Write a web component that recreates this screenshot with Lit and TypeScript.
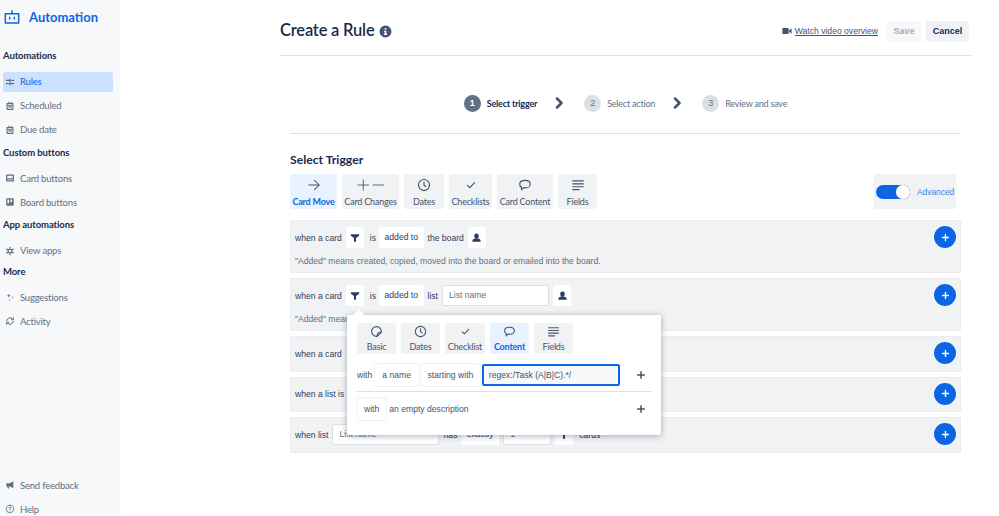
import { LitElement, html, css, svg } from 'lit';
import { customElement } from 'lit/decorators.js';

// all icons drawn on a 24 box, stroke based unless filled below
const line = (d: string, w = 2) => html`<svg viewBox="0 0 24 24" fill="none" stroke="currentColor" stroke-width=${w} stroke-linecap="round" stroke-linejoin="round">${svg`<path d=${d}></path>`}</svg>`;
const fill = (d: string) => html`<svg viewBox="0 0 24 24" fill="currentColor">${svg`<path fill-rule="evenodd" d=${d}></path>`}</svg>`;

const icons = {
  bot: line('M2 7h20v14H2zM12 7V2.500M8.500 12.500v2.500M15.500 12.500v2.500', 2.200),
  sliders: line('M3 8h9M16 8h5M3 16h5M12 16h9M12 5.500v5M12 13.500v5', 2.400),
  calendar: line('M5 6h14v14H5zM5 10h14M9 3v3M15 3v3M9 14h6', 2.600),
  card: line('M4 5h16v14H4zM4 14h16', 3),
  board: fill('M4 3h16a1 1 0 0 1 1 1v16a1 1 0 0 1-1 1H4a1 1 0 0 1-1-1V4a1 1 0 0 1 1-1zm2 3v9h4V6zm7 0v6h4V6z'),
  gear: line('M12 7.500a4.500 4.500 0 1 0 0 9 4.500 4.500 0 0 0 0-9zM12 3v2M12 19v2M4.200 7.500l1.700 1M18.100 15.500l1.700 1M4.200 16.500l1.700-1M18.100 8.500l1.700-1', 3),
  sparkle: fill('M9 4l1.200 3.800L14 9l-3.800 1.200L9 14l-1.200-3.800L4 9l3.800-1.200zM18 9.500l.8 2.200 2.200.8-2.200.8-.8 2.200-.8-2.200-2.200-.8 2.200-.8zM11 16l.7 2.300L14 19l-2.300.7L11 22l-.7-2.300L8 19l2.300-.7z'),
  sync: line('M4 11a8 8 0 0 1 14-4l2 2M20 4v5h-5M20 13a8 8 0 0 1-14 4l-2-2M4 20v-5h5', 2.400),
  megaphone: fill('M20 3v16l-9-3.500H9l1 5H6.500l-1-5H4a1 1 0 0 1-1-1v-6a1 1 0 0 1 1-1h7z'),
  help: line('M12 3a9 9 0 1 0 0 18 9 9 0 0 0 0-18zM9.500 9.500a2.500 2.500 0 1 1 3.600 2.200c-.8.4-1.100 1-1.100 1.800M12 17v.2', 2),
  info: fill('M12 1a11 11 0 1 1 0 22 11 11 0 0 1 0-22zm-1.600 4.500v3h3.200v-3zM9 10.500v2h1.400V16H9v2.500h6V16h-1.400v-5.500z'),
  video: fill('M1 5h15v14H1zM17 10.500L23 5.500v13l-6-5z'),
  chevron: line('M8 3l9 9-9 9', 5),
  arrow: line('M3 12h18M13 4l8 8-8 8', 1.800),
  clock: line('M12 2.500a9.500 9.500 0 1 0 0 19 9.500 9.500 0 0 0 0-19zM12 7v5.500l3 2', 2),
  check: line('M6 12.500l4 4L18 8', 2),
  comment: line('M12 4c5 0 9 2.600 9 6.500S17 17 12.500 17c-1 0-2 0-3-.3L6 20v-4.300C4 15 3 12.800 3 10.500 3 6.600 7 4 12 4z', 2),
  lines: line('M3 5h18M3 10h18M3 15h18M3 20h11', 2),
  sticker: line('M12 3a9 9 0 1 0 0 18c1 0 1.500-.2 2-.7l6.300-6.300c.5-.5.7-1 .7-2a9 9 0 0 0-9-9zM13 21c0-5 3-8 8-8', 2),
  funnel: fill('M2 3h20v3.500L14.500 12v9h-5v-9L2 6.500z'),
  person: fill('M12 3a5 5 0 0 1 5 5v1a5 5 0 0 1-10 0V8a5 5 0 0 1 5-5zM3 21v-2c0-3 3-4.500 6-5h6c3 .5 6 2 6 5v2z'),
  plus: line('M12 4v16M4 12h16', 3.600),
};

const sideNav = [
  { head: 'Automations', gap: 'g1', items: [['Rules', icons.sliders, true], ['Scheduled', icons.calendar], ['Due date', icons.calendar]] },
  { head: 'Custom buttons', gap: 'g2', items: [['Card buttons', icons.card], ['Board buttons', icons.board]] },
  { head: 'App automations', gap: 'g2', items: [['View apps', icons.gear]] },
  { head: 'More', gap: 'g4', items: [['Suggestions', icons.sparkle], ['Activity', icons.sync]] },
];

const triggerTabs = [
  ['Card Move', icons.arrow, 47, true],
  ['Card Changes', null, 57],
  ['Dates', icons.clock, 40],
  ['Checklists', icons.check, 43],
  ['Card Content', icons.comment, 56],
  ['Fields', icons.lines, 39],
];

const popTabs = [
  ['Basic', icons.sticker],
  ['Dates', icons.clock],
  ['Checklist', icons.check],
  ['Content', icons.comment, true],
  ['Fields', icons.lines],
];

@customElement('app-root')
export class AppRoot extends LitElement {
  static styles = css`
    :host {
      display: flex;
      width: 999px;
      height: 516px;
      overflow: hidden;
      background: #fff;
      color: #172b4d;
      font-family: "Liberation Sans", Arial, sans-serif;
      font-size: 8.600px;
    }
    svg { display: block; width: 100%; height: 100%; }
    .side {
      width: 120px;
      flex: none;
      background: #f7f8f9;
      display: flex;
      flex-direction: column;
      font-family: Lato, sans-serif;
      box-sizing: border-box;
    }
    .brand {
      display: flex;
      align-items: center;
      height: 17px;
      margin: 8px 0 0 4px;
      gap: 9px;
      color: #0c66e4;
      font-size: 13px;
      font-weight: 700;
    }
    .brand i { width: 16px; height: 16px; display: block; }
    .sec { font-size: 9.500px; letter-spacing: -.1px; font-weight: 700; height: 14px; line-height: 14px; margin-left: 3px; }
    .g1 { margin-top: 24px; }
    .g2 { margin-top: 6px; }
    .g4 { margin-top: 4px; }
    .nav {
      display: flex;
      align-items: center;
      height: 20px;
      margin: 4px 7px 0 3px;
      padding-left: 2px;
      gap: 5px;
      font-size: 9.500px;
      letter-spacing: -.2px;
      color: #626f86;
      border-radius: 2px;
    }
    .sec + .nav { margin-top: 8.500px; }
    .nav i { width: 10px; height: 10px; display: block; color: #626f86; flex: none; }
    .nav.on { background: #cce0ff; color: #0c66e4; }
    .nav.on i { color: #44546f; }
    .push { margin-top: auto; margin-bottom: -3px; }
    .main {
      margin-left: 160px;
      width: 691px;
      flex: none;
      display: flex;
      flex-direction: column;
    }
    .top {
      display: flex;
      align-items: center;
      height: 56px;
      box-sizing: border-box;
      border-bottom: 1px solid #dcdfe4;
      padding: 7px 2px 0 0;
    }
    h1 {
      font: 600 16.500px Lato, sans-serif;
      letter-spacing: -.2px;
      margin: -2px 0 0;
      white-space: nowrap;
    }
    .info { width: 13px; height: 13px; margin: 1px 0 0 5px; color: #44546f; }
    .watch {
      margin-left: auto;
      display: flex;
      align-items: center;
      gap: 3px;
      color: #44546f;
      text-decoration: underline;
    }
    .watch i { width: 10px; height: 10px; display: block; }
    .btn {
      height: 21px;
      line-height: 21px;
      text-align: center;
      border-radius: 2px;
      font-weight: 700;
      font-size: 9px;
      background: #f1f2f4;
    }
    .save { width: 34px; margin-left: 9px; background: #f7f8f9; color: #a5adba; }
    .cancel { width: 43px; margin-left: 5px; }
    .steps {
      display: flex;
      align-items: center;
      justify-content: center;
      height: 78px;
      margin: 0 10px;
      border-bottom: 1px solid #dcdfe4;
      font-family: Lato, sans-serif;
      font-size: 9px;
      letter-spacing: -.2px;
      color: #626f86;
      padding-top: 17px;
      box-sizing: border-box;
    }
    .num {
      width: 17px;
      height: 17px;
      border-radius: 50%;
      background: #dcdfe4;
      display: flex;
      align-items: center;
      justify-content: center;
      font: 9px "Liberation Sans", sans-serif;
      margin-right: 6px;
    }
    .num.on { background: #626f86; color: #fff; font-weight: 700; }
    .lbl.on { font-weight: 700; color: #172b4d; }
    .chev { width: 12px; height: 12px; margin: 0 19px 0 16px; color: #44546f; display: block; }
    .body { margin: 0 10px; }
    h2 {
      font: 700 12.200px/16px Lato, sans-serif;
      margin: 18px 0 0;
    }
    .toolbar { display: flex; gap: 5px; margin-top: 6px; height: 35px; }
    .tab {
      flex: none;
      box-sizing: border-box;
      background: #f1f2f4;
      border-radius: 2px;
      display: flex;
      flex-direction: column;
      align-items: center;
      padding-top: 4px;
      font-family: Lato, sans-serif;
      font-size: 9px;
      letter-spacing: -.2px;
      line-height: 11px;
      color: #44546f;
      white-space: nowrap;
    }
    .tab i { width: 14px; height: 14px; display: block; color: #44546f; margin-bottom: 4px; }
    .tab.on { background: #e9f2ff; color: #0c66e4; font-weight: 700; }
    .tab .pm { width: 27px; display: flex; gap: 2px; }
    .tab .pm i { width: 12.500px; }
    .adv {
      margin-left: auto;
      margin-right: 5px;
      width: 82px;
      background: #f1f2f4;
      border-radius: 2px;
      display: flex;
      align-items: center;
      padding-left: 2px;
      gap: 7px;
      box-sizing: border-box;
      color: #3b7fe8;
      font-size: 8.400px;
    }
    .sw { width: 34px; height: 14px; border-radius: 7px; background: #0c66e4; display: flex; justify-content: flex-end; }
    .sw b { width: 14px; height: 14px; border-radius: 50%; background: #fff; box-shadow: 0 0 1px #8590a2; }
    .rules { position: relative; margin-top: 11px; display: flex; flex-direction: column; gap: 5px; }
    .row {
      position: relative;
      background: #f1f2f4;
      border-radius: 2px;
      box-shadow: inset 0 0 0 1px #ebecf0;
      padding: 7px 5px 0;
      box-sizing: border-box;
      height: 35.500px;
    }
    .row.tall { height: 53px; }
    .line { display: flex; align-items: center; gap: 4px; height: 21px; white-space: nowrap; color: #2c3e5d; }
    .is { margin-left: 2px; margin-right: -1px; }
    .chip {
      background: #fff;
      height: 21px;
      line-height: 21px;
      padding: 0 5.500px;
      border-radius: 2px;
      box-sizing: border-box;
    }
    .chip.ic { padding: 0; width: 18px; display: flex; align-items: center; justify-content: center; }
    .chip.ic i { width: 10px; height: 10px; display: block; color: #2c3e5d; }
    .chip.ic i.p { width: 11px; height: 11px; }
    .chip.qty { width: 38px; }
    .inp {
      box-sizing: border-box;
      background: #fff;
      border: 1px solid #dcdfe4;
      height: 21px;
      line-height: 19px;
      padding: 0 6px;
      color: #626f86;
      border-radius: 2px;
    }
    .inp.name { width: 107px; }
    .inp.count { width: 48px; }
    .note { margin-top: 8px; color: #626f86; white-space: nowrap; }
    .add {
      position: absolute;
      right: 5px;
      top: 6px;
      width: 22px;
      height: 22px;
      border-radius: 50%;
      background: #0c66e4;
      color: #fff;
      display: flex;
      align-items: center;
      justify-content: center;
      box-shadow: 0 0 0 1px #f7f8f9;
    }
    .add i { width: 9px; height: 9px; display: block; }
    .pop {
      position: absolute;
      left: 57px;
      top: 95px;
      width: 314px;
      height: 120px;
      box-sizing: border-box;
      background: #fff;
      border-radius: 2px;
      box-shadow: 0 1px 6px rgba(9, 30, 66, .35);
      padding: 8px 9px 0 10px;
    }
    .pop::before {
      content: "";
      position: absolute;
      left: 8px;
      top: -4px;
      width: 8px;
      height: 8px;
      background: #fff;
      transform: rotate(45deg);
    }
    .pop .tabs { display: flex; gap: 5px; height: 31px; }
    .pop .tab { width: 39px; padding-top: 2px; }
    .pop .tab i { height: 13px; width: 13px; margin-bottom: 3px; }
    .pop .tab:nth-child(3) { width: 40px; }
    .pl { display: flex; align-items: center; gap: 2px; height: 22px; color: #44546f; white-space: nowrap; }
    .pl.first { margin-top: 10px; }
    .pl .chip { height: 22px; line-height: 22px; box-shadow: 0 0 0 1px #f1f2f4; padding: 0 7px; margin-right: 1px; }
    .pl.first .chip:first-of-type { margin-left: 1px; }
    .pl .chip.wide { padding: 0 6.500px; }
    .re {
      box-sizing: border-box;
      width: 138px;
      height: 22px;
      line-height: 18px;
      border: 2px solid #0c66e4;
      border-radius: 2px;
      background: #f7f8f9;
      padding: 0 5px;
      color: #44546f;
      margin-left: -1px;
    }
    .pp { width: 10px; height: 10px; display: block; color: #44546f; margin-left: auto; margin-right: 6px; }
    .div { height: 1px; background: #dcdfe4; margin: 5px 0 6px; }
  `;

  renderNav(n: any[]) {
    return html`<div class="nav ${n[2] ? 'on' : ''}"><i>${n[1]}</i>${n[0]}</div>`;
  }

  renderTab(t: any[]) {
    const icon = t[1]
      ? html`<i>${t[1]}</i>`
      : html`<div class="pm"><i>${line('M12 2v20M2 12h20', 1.700)}</i><i>${line('M2 12h20', 1.700)}</i></div>`;
    return html`<div class="tab ${t[3] ? 'on' : ''}" style="width:${t[2]}px">${icon}${t[0]}</div>`;
  }

  addBtn() {
    return html`<div class="add"><i>${icons.plus}</i></div>`;
  }

  render() {
    return html`
      <aside class="side">
        <div class="brand"><i>${icons.bot}</i>Automation</div>
        ${sideNav.map(s => html`
          <div class="sec ${s.gap}">${s.head}</div>
          ${s.items.map(n => this.renderNav(n))}
        `)}
        <div class="push">
          ${this.renderNav(['Send feedback', icons.megaphone])}
          ${this.renderNav(['Help', icons.help])}
        </div>
      </aside>
      <main class="main">
        <header class="top">
          <h1>Create a Rule</h1>
          <i class="info">${icons.info}</i>
          <div class="watch"><i>${icons.video}</i><span>Watch video overview</span></div>
          <div class="btn save">Save</div>
          <div class="btn cancel">Cancel</div>
        </header>
        <nav class="steps">
          <div class="num on">1</div><div class="lbl on">Select trigger</div>
          <i class="chev">${icons.chevron}</i>
          <div class="num">2</div><div class="lbl">Select action</div>
          <i class="chev">${icons.chevron}</i>
          <div class="num">3</div><div class="lbl">Review and save</div>
        </nav>
        <section class="body">
          <h2>Select Trigger</h2>
          <div class="toolbar">
            ${triggerTabs.map(t => this.renderTab(t))}
            <div class="adv"><div class="sw"><b></b></div>Advanced</div>
          </div>
          <div class="rules">
            <div class="row tall">
              <div class="line">when a card <span class="chip ic"><i>${icons.funnel}</i></span> <span class="is">is</span>
                <span class="chip">added to</span> the board <span class="chip ic"><i class="p">${icons.person}</i></span></div>
              <div class="note">"Added" means created, copied, moved into the board or emailed into the board.</div>
              ${this.addBtn()}
            </div>
            <div class="row tall">
              <div class="line">when a card <span class="chip ic"><i>${icons.funnel}</i></span> <span class="is">is</span>
                <span class="chip">added to</span> list <span class="inp name">List name</span>
                <span class="chip ic"><i class="p">${icons.person}</i></span></div>
              <div class="note">"Added" means created, copied, moved into the board or emailed into the board.</div>
              ${this.addBtn()}
            </div>
            <div class="row"><div class="line">when a card</div>${this.addBtn()}</div>
            <div class="row"><div class="line">when a list is</div>${this.addBtn()}</div>
            <div class="row">
              <div class="line">when list <span class="inp name">List name</span> has
                <span class="chip qty">exactly</span>
                <span class="inp count">1</span>
                <span class="chip ic"><i>${icons.funnel}</i></span> <span class="is">cards</span></div>
              ${this.addBtn()}
            </div>
            <div class="pop">
              <div class="tabs">
                ${popTabs.map(t => html`<div class="tab ${t[2] ? 'on' : ''}"><i>${t[1]}</i>${t[0]}</div>`)}
              </div>
              <div class="pl first">with <span class="chip">a name</span> <span class="chip wide">starting with</span>
                <span class="re">regex:/Task (A|B|C).*/</span><i class="pp">${icons.plus}</i></div>
              <div class="div"></div>
              <div class="pl"><span class="chip">with</span> an empty description<i class="pp">${icons.plus}</i></div>
            </div>
          </div>
        </section>
      </main>
    `;
  }
}
